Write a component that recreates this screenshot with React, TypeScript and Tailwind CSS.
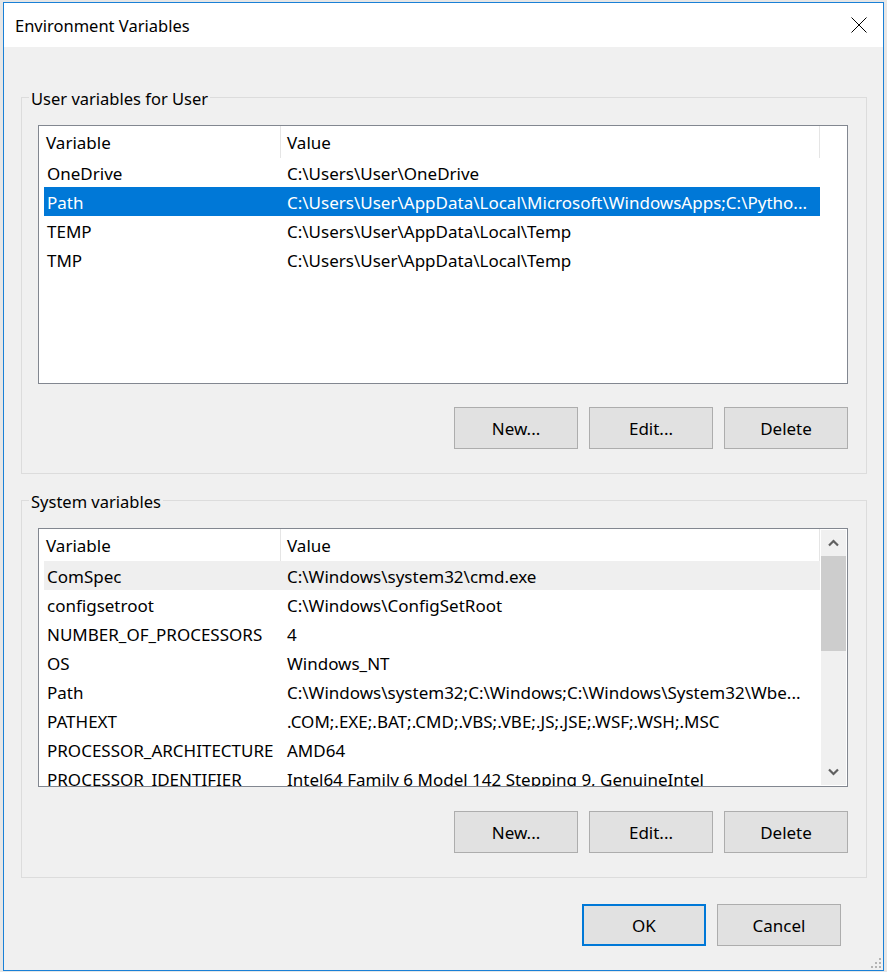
const font = { fontFamily: '"Noto Sans", "Open Sans", sans-serif' };

type Row = { name: string; value: string; state?: "selected" | "hover" };

const userVars: Row[] = [
  { name: "OneDrive", value: String.raw`C:\Users\User\OneDrive` },
  {
    name: "Path",
    value: String.raw`C:\Users\User\AppData\Local\Microsoft\WindowsApps;C:\Pytho...`,
    state: "selected",
  },
  { name: "TEMP", value: String.raw`C:\Users\User\AppData\Local\Temp` },
  { name: "TMP", value: String.raw`C:\Users\User\AppData\Local\Temp` },
];

const systemVars: Row[] = [
  { name: "ComSpec", value: String.raw`C:\Windows\system32\cmd.exe`, state: "hover" },
  { name: "configsetroot", value: String.raw`C:\Windows\ConfigSetRoot` },
  { name: "NUMBER_OF_PROCESSORS", value: "4" },
  { name: "OS", value: "Windows_NT" },
  { name: "Path", value: String.raw`C:\Windows\system32;C:\Windows;C:\Windows\System32\Wbe...` },
  { name: "PATHEXT", value: ".COM;.EXE;.BAT;.CMD;.VBS;.VBE;.JS;.JSE;.WSF;.WSH;.MSC" },
  { name: "PROCESSOR_ARCHITECTURE", value: "AMD64" },
  { name: "PROCESSOR_IDENTIFIER", value: "Intel64 Family 6 Model 142 Stepping 9, GenuineIntel" },
];

export default function App() {
  return (
    <div className="h-[972px] w-[887px] overflow-hidden bg-[#e6e6e6] pl-[3px] pt-[2px]" style={font}>
      <div className="flex h-[969px] w-[881px] flex-col border border-[#1a80d6] bg-[#f0f0f0]">
        <div className="flex h-[44px] shrink-0 items-center justify-between bg-white pl-[11px] pr-[16px]">
          <span className="pt-[2px] text-[16.5px] text-black">Environment Variables</span>
          <svg width="16" height="16" viewBox="0 0 16 16">
            <path d="M0.5 0.5 L15.5 15.5 M15.5 0.5 L0.5 15.5" stroke="#000" strokeWidth="1" fill="none" />
          </svg>
        </div>

        <div className="relative flex flex-1 flex-col pl-[17px] pr-[16px] pt-[50px]">
          <GroupBox label="User variables for User" buttonsGap="mt-[23px]">
            <VarList rows={userVars} />
          </GroupBox>

          <div className="mt-[26px]">
            <GroupBox label="System variables" buttonsGap="mt-[24px]">
              <VarList rows={systemVars} scrollbar />
            </GroupBox>
          </div>

          <div className="mr-[26px] mt-[26px] flex justify-end gap-[11px]">
            <button
              type="button"
              className="h-[42px] w-[124px] border-2 border-[#0078d7] bg-[#e1e1e1] pt-[1px] text-[17px] text-black"
            >
              OK
            </button>
            <button
              type="button"
              className="h-[42px] w-[124px] border border-[#adadad] bg-[#e1e1e1] pt-[1px] text-[17px] text-black"
            >
              Cancel
            </button>
          </div>

          <svg width="12" height="12" viewBox="0 0 12 12" className="absolute bottom-[1px] right-[1px]">
            <g fill="#b4b4b4">
              <rect x="9" y="1" width="2" height="2" />
              <rect x="5" y="5" width="2" height="2" />
              <rect x="9" y="5" width="2" height="2" />
              <rect x="1" y="9" width="2" height="2" />
              <rect x="5" y="9" width="2" height="2" />
              <rect x="9" y="9" width="2" height="2" />
            </g>
          </svg>
        </div>
      </div>
    </div>
  );
}

function GroupBox({
  label,
  buttonsGap,
  children,
}: {
  label: string;
  buttonsGap: string;
  children: React.ReactNode;
}) {
  return (
    <div className="relative border border-[#dcdcdc] pb-[24px] pl-[16px] pr-[18px] pt-[27px]">
      <span className="absolute -top-[10px] left-[7px] bg-[#f0f0f0] px-[2px] text-[16.5px] leading-[22px] text-black">
        {label}
      </span>
      {children}
      <div className={`${buttonsGap} flex justify-end gap-[11px]`}>
        <WinButton>New...</WinButton>
        <WinButton>Edit...</WinButton>
        <WinButton>Delete</WinButton>
      </div>
    </div>
  );
}

function WinButton({ children }: { children: React.ReactNode }) {
  return (
    <button
      type="button"
      className="h-[42px] w-[124px] border border-[#adadad] bg-[#e1e1e1] pt-[1px] text-[17px] text-black"
    >
      {children}
    </button>
  );
}

function VarList({ rows, scrollbar = false }: { rows: Row[]; scrollbar?: boolean }) {
  return (
    <div className="flex h-[259px] w-[810px] overflow-hidden border border-[#828790] bg-white">
      <div className="w-[782px] shrink-0 overflow-hidden">
        <div className="flex h-[32px] items-center text-[17px] text-black">
          <div className="flex h-full w-[242px] items-center border-r border-[#e5e5e5] pl-[7px] pt-[2px]">
            Variable
          </div>
          <div className="flex h-full w-[539px] items-center border-r border-[#e5e5e5] pl-[6px] pt-[2px]">
            Value
          </div>
        </div>
        {rows.map((row) => (
          <div
            key={row.name}
            className={[
              "ml-[5px] flex h-[29px] w-[776px] items-center whitespace-nowrap pt-[2px] text-[17px]",
              row.state === "selected"
                ? "bg-[#0078d7] text-white"
                : row.state === "hover"
                  ? "bg-[#efefef] text-black"
                  : "text-black",
            ].join(" ")}
          >
            <div className="w-[236px] shrink-0 overflow-hidden pl-[3px]">{row.name}</div>
            <div className="min-w-0 flex-1 overflow-hidden pl-[7px]">{row.value}</div>
          </div>
        ))}
      </div>
      {scrollbar ? <ScrollBar /> : null}
    </div>
  );
}

function ScrollBar() {
  return (
    <div className="my-[1px] flex w-[25px] shrink-0 flex-col bg-[#f0f0f0]">
      <div className="flex h-[26px] items-center justify-center">
        <svg width="11" height="8" viewBox="0 0 11 8">
          <path d="M1 6.5 L5.5 2 L10 6.5" stroke="#606060" strokeWidth="2.2" fill="none" />
        </svg>
      </div>
      <div className="h-[95px] bg-[#cdcdcd]" />
      <div className="flex-1" />
      <div className="flex h-[26px] items-center justify-center">
        <svg width="11" height="8" viewBox="0 0 11 8">
          <path d="M1 1.5 L5.5 6 L10 1.5" stroke="#606060" strokeWidth="2.2" fill="none" />
        </svg>
      </div>
    </div>
  );
}
